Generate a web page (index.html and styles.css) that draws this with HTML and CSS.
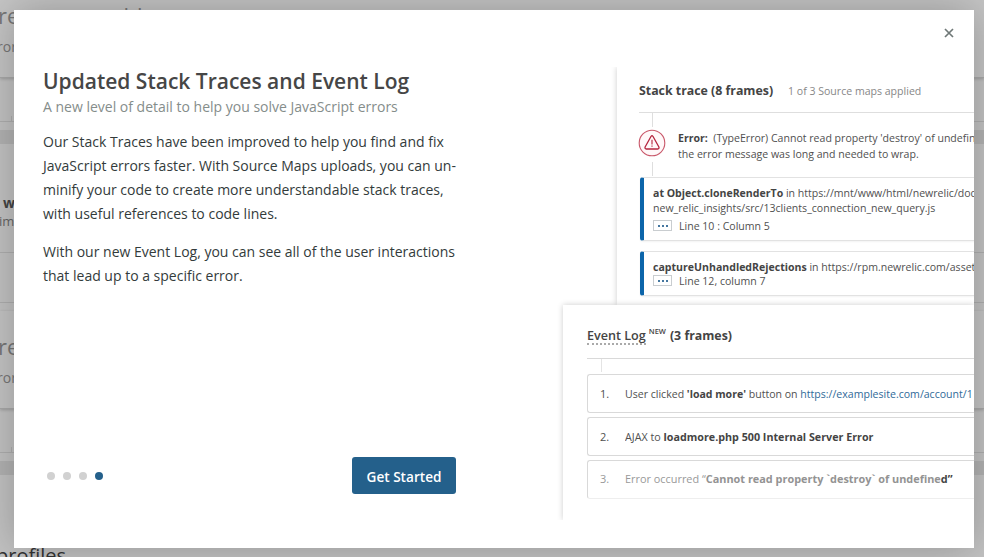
FILE: index.html
```html
<!DOCTYPE html>
<html lang="en">
<head>
<meta charset="utf-8">
<title>Updated Stack Traces and Event Log</title>
<link rel="stylesheet" href="styles.css">
</head>
<body>
<main class="page">
  <section class="card first">
    <h2>re<span>enable</span></h2>
    <p>ror</p>
  </section>
  <div class="row tabs"></div>
  <div class="strip"></div>
  <div class="row item"><b>w</b><span>im</span></div>
  <div class="row spacer"></div>
  <div class="gap"></div>
  <section class="card second">
    <h2>re</h2>
    <p>ror</p>
  </section>
  <div class="row tabs"></div>
  <div class="strip"></div>
  <div class="row last"><h3>profiles</h3></div>
</main>
<div class="modal" role="dialog">
  <button class="close" aria-label="Close"><svg width="10" height="10" viewBox="0 0 10 10"><path d="M1 1L9 9M9 1L1 9" stroke="#6f7877" stroke-width="1.7" fill="none"/></svg></button>
  <div class="intro">
    <h1>Updated Stack Traces and Event Log</h1>
    <p class="sub">A new level of detail to help you solve JavaScript errors</p>
    <p class="copy">Our Stack Traces have been improved to help you find and fix<br>JavaScript errors faster. With Source Maps uploads, you can un-<br>minify your code to create more understandable stack traces,<br>with useful references to code lines.</p>
    <p class="copy">With our new Event Log, you can see all of the user interactions<br>that lead up to a specific error.</p>
    <div class="actions">
      <div class="dots"><i></i><i></i><i></i><i class="on"></i></div>
      <button class="go">Get Started</button>
    </div>
  </div>
  <div class="preview">
    <section class="trace">
      <header><strong>Stack trace (8 frames)</strong><span class="l">1 of 3 Source maps applied</span></header>
      <div class="error">
        <div class="rail">
          <svg width="28" height="28" viewBox="0 0 28 28" fill="none"><circle cx="14" cy="14" r="12.8" fill="#fff8f9" stroke="#c9586a" stroke-width="1.1"/><path d="M13.1 7.3Q14 6.1 14.9 7.3L20.9 18Q21.4 19.8 19.7 20H8.3Q6.6 19.8 7.1 18Z" stroke="#b5243d" stroke-width="1.3" stroke-linejoin="round"/><path d="M14 10.8V15.4M14 16.6V17.8" stroke="#b5243d" stroke-width="1.1"/></svg>
        </div>
        <p><span class="l"><b>Error:</b>&nbsp; (TypeError) Cannot read property 'destroy' of undefin</span><span class="l">the error message was long and needed to wrap.</span></p>
      </div>
      <div class="frame one">
        <span class="l"><b>at Object.cloneRenderTo</b> in https://mnt/www/html/newrelic/doc</span>
        <span class="l">new_relic_insights/src/13clients_connection_new_query.js</span>
        <div class="loc"><span class="more"><i></i><i></i><i></i></span><span class="l">Line 10 : Column 5</span></div>
      </div>
      <div class="frame two">
        <span class="l"><b>captureUnhandledRejections</b> in https://rpm.newrelic.com/asset</span>
        <div class="loc"><span class="more"><i></i><i></i><i></i></span><span class="l">Line 12, column 7</span></div>
      </div>
    </section>
    <section class="events">
      <header><span class="name">Event Log</span><sup>NEW</sup><span class="count">(3 frames)</span></header>
      <div class="tick"></div>
      <ol>
        <li><span class="num">1.</span><span class="l">User clicked <b>'load more'</b> button on <a>https://examplesite.com/account/1</a></span></li>
        <li><span class="num">2.</span><span class="l ajax">AJAX to <b>loadmore.php 500 Internal Server Error</b></span></li>
        <li class="faded"><span class="num">3.</span><span class="l wide">Error occurred “<b>Cannot read property `destroy` of undefine<span class="end">d”</span></b></span></li>
      </ol>
    </section>
  </div>
</div>
</body>
</html>
```
FILE: styles.css
```css
* { box-sizing: border-box; }
body { margin: 0; width: 984px; height: 557px; overflow: hidden; background: #bebebe; font-family: "Open Sans", sans-serif; color: #333b3b; }
h1, h2, h3, p, ol { margin: 0; padding: 0; }
button { font-family: inherit; border: 0; padding: 0; }

.page { height: 557px; overflow: hidden; background: #c3c3c3; }
.card { background: #c5c5c5; border-bottom: 1px solid #a9a9a9; box-shadow: 0 1px 3px rgba(0,0,0,.2); }
.card h2 { font-size: 22px; line-height: 30px; font-weight: 400; color: #777; margin-left: -2px; }
.card h2 span { margin-left: 66px; }
.card p { font-size: 14px; line-height: 20px; color: #777; margin-left: -3px; }
.first { height: 78px; }
.first p { margin-top: 7px; }
.second { height: 98px; padding-top: 20px; }
.second p { margin-top: 7px; }
.row { border-bottom: 1px solid #afafaf; }
.tabs { height: 44px; background: linear-gradient(#afafaf,#afafaf) 11px 100%/1px 5px no-repeat; }
.strip { height: 14px; margin-top: 8px; background: #b3b3b3; }
.item { height: 109px; padding: 49px 0 0; font-size: 14px; line-height: 19px; }
.item b { display: block; margin-left: 3px; }
.item span { display: block; font-size: 13px; margin-left: -1px; color: #666; }
.spacer { height: 50px; }
.gap { height: 8px; }
.last { border: 0; padding-top: 68px; }
.last h3 { margin-left: -4px; font-size: 20px; line-height: 26px; font-weight: 400; color: #333; }

.modal { position: absolute; left: 14px; top: 10px; width: 960px; height: 538px; background: #fff; box-shadow: 0 0 40px rgba(0,0,0,.25); display: flex; padding: 57px 0 0 29px; }
.close { position: absolute; left: 930px; top: 18px; width: 10px; height: 10px; background: none; }
.close svg { display: block; }
.intro { width: 413px; flex: none; white-space: nowrap; }
h1 { font-size: 21px; line-height: 29px; font-weight: 600; color: #464646; }
.sub { font-size: 14px; line-height: 20px; margin: 1px 0 13px; color: #858d8b; }
.copy { font-size: 14px; line-height: 24px; margin-bottom: 14px; }
.actions { display: flex; justify-content: space-between; align-items: center; margin-top: 169px; }
.dots { display: flex; gap: 8px; padding-left: 4px; }
.dots i { width: 8px; height: 8px; border-radius: 50%; background: #d1d1d1; }
.dots .on { background: #24608b; }
.go { width: 104px; height: 37px; border-radius: 3px; background: #24608b; color: #fff; font-size: 13.6px; font-weight: 600; line-height: 35px; padding-top: 2px; }

.preview { margin-left: 101px; width: 417px; height: 453px; overflow: hidden; white-space: nowrap; color: #505050; }
.l { display: block; width: max-content; font-size: 11px; transform: scaleX(.96); transform-origin: 0 50%; }
b { font-weight: 700; color: #444; }
.trace { margin-left: 60px; height: 238px; padding: 0 0 0 22px; box-shadow: 0 0 6px rgba(0,0,0,.2); }
.trace header { height: 46px; border-bottom: 1px solid #dedede; display: flex; align-items: center; padding-top: 2px; }
.trace header strong { width: 149px; font-size: 12.35px; color: #444; flex: none; }
.trace header .l { color: #878787; }
.error { display: flex; height: 64px; }
.rail { flex: none; width: 39px; height: 63px; padding-top: 16px; background: linear-gradient(#dedede,#dedede) 13px 0/1px 14px no-repeat, linear-gradient(#dedede,#dedede) 13px 49px/1px 14px no-repeat; }
.rail svg { display: block; margin-left: -1px; }
.error p { padding-top: 17px; }
.error .l { line-height: 16px; }
.frame { margin-left: 1px; margin-right: -3px; border: 1px solid #e2e2e2; border-left: 4px solid #0c65aa; border-radius: 3px 0 0 3px; padding: 7px 0 0 9px; box-shadow: 0 1px 2px rgba(0,0,0,.05); }
.one { height: 64px; }
.two { height: 45px; margin-top: 10px; }
.frame .l { line-height: 15px; }
.loc { display: flex; align-items: center; }
.one .loc { margin-top: 3px; }
.two .loc { margin-top: -1px; }
.more { width: 19px; height: 11px; border: 1px solid #c9cdd0; display: flex; justify-content: center; align-items: center; gap: 2px; margin-right: 7px; }
.more i { width: 2px; height: 2px; background: #4577a0; }

.events { position: relative; margin-left: 6px; height: 215px; background: #fff; padding-left: 24px; box-shadow: 0 0 6px rgba(0,0,0,.2); }
.events header { height: 54px; border-bottom: 1px solid #d9d9d9; display: flex; padding-top: 22px; font-size: 12.6px; font-weight: 600; line-height: 18px; color: #444; }
.name { height: 18px; border-bottom: 2px dotted #aaa; }
.events sup { font-size: 7.5px; line-height: 9px; margin: 0 4px 0 3px; }
.count { font-weight: 700; font-size: 12.35px; }
.tick { height: 15px; background: linear-gradient(#e4e4e4,#e4e4e4) 14px 0/1px 13px no-repeat; }
li { display: flex; align-items: center; height: 39px; margin-bottom: 4px; border: 1px solid #d9d9d9; border-right: 0; border-radius: 3px 0 0 3px; list-style: none; padding-left: 12px; }
.num { flex: none; width: 25px; font-size: 11px; }
a { color: #306a98; }
.ajax { transform: scaleX(.976); }
.wide { transform: scaleX(.99); }
.faded { color: #999; border-bottom-color: #eee; padding-bottom: 3px; }
.faded b { color: #939393; }
.faded .end { color: #444; }
```
